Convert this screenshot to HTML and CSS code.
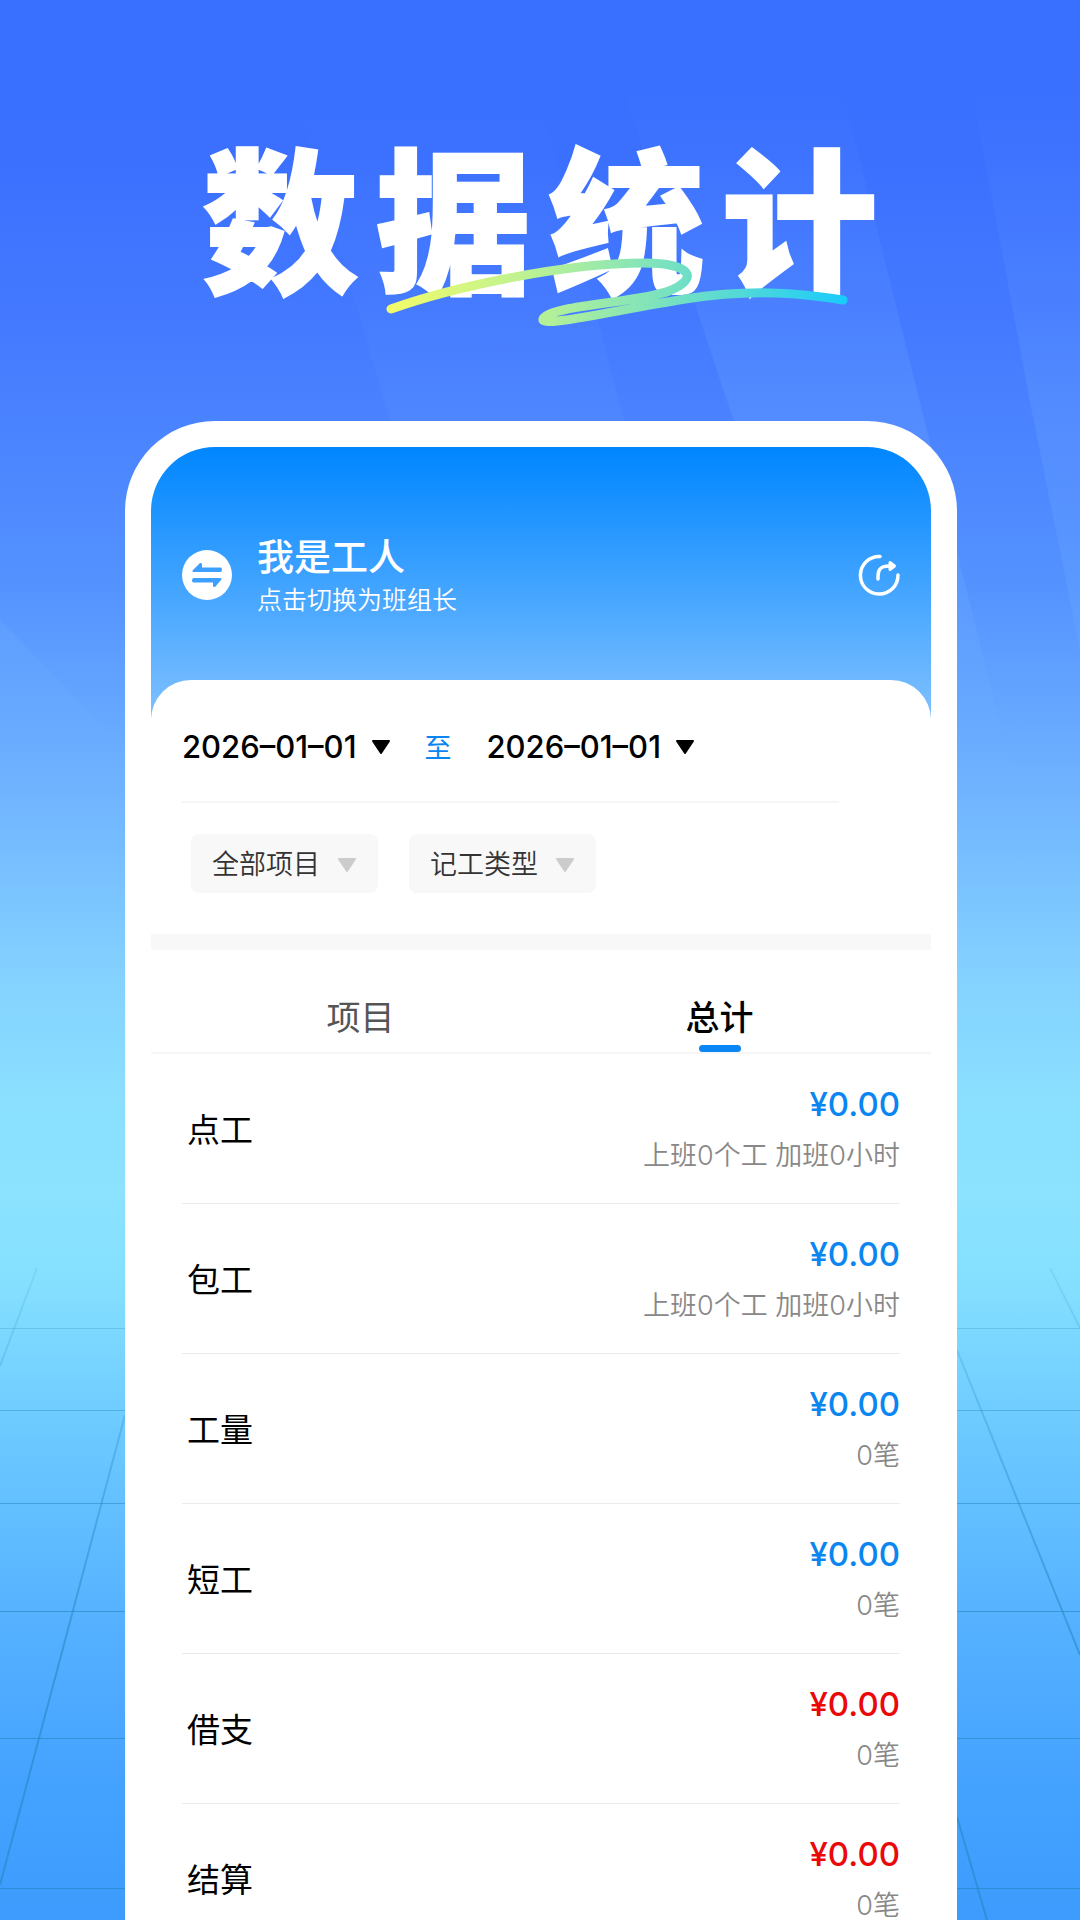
FILE: index.html
```
<!DOCTYPE html>
<html lang="zh-CN">
<head>
    <meta charset="utf-8">
    <meta name="viewport" content="width=device-width, initial-scale=1">
    <title>数据统计</title>
    <link rel="stylesheet" href="styles.css">
</head>
<body>
<div class="page">
    <svg class="backdrop" viewBox="0 0 1080 1920" preserveAspectRatio="none" aria-hidden="true">
        <defs>
            <linearGradient id="beam" gradientUnits="userSpaceOnUse" x1="0" y1="80" x2="0" y2="780">
                <stop offset="0" stop-color="#8cc8ff" stop-opacity="0"/>
                <stop offset="0.45" stop-color="#8cc8ff" stop-opacity="0.14"/>
                <stop offset="0.75" stop-color="#8cc8ff" stop-opacity="0.12"/>
                <stop offset="1" stop-color="#8cc8ff" stop-opacity="0"/>
            </linearGradient>
            <linearGradient id="grid" gradientUnits="userSpaceOnUse" x1="0" y1="1260" x2="0" y2="1650">
                <stop offset="0" stop-color="#1f86bd" stop-opacity="0.1"/>
                <stop offset="1" stop-color="#1f86bd" stop-opacity="0.55"/>
            </linearGradient>
        </defs>
        <g fill="url(#beam)">
            <path d="M0 620 L125 750 L200 860 L0 860Z"/>
            <path d="M290 80 L396 440 H629 L535 80Z" opacity="0.4"/>
            <path d="M620 80 L737 430 L900 860 H1034 L959 560 L840 80Z"/>
            <path d="M970 80 L1030 402 L1080 650 L1080 80Z"/>
        </g>
        <g fill="none" stroke="url(#grid)" stroke-width="2">
            <path d="M37 1268 L0 1366 M1050 1268 L1080 1328 M125 1415 L0 1885 M957 1350 L1080 1655 M957 1817 L987 1920"/>
        </g>
        <g fill="#1f86bd">
            <rect y="1328" width="1080" height="1" opacity="0.25"/>
            <rect y="1410" width="1080" height="1" opacity="0.4"/>
            <rect y="1503" width="1080" height="1" opacity="0.5"/>
            <rect y="1611" width="1080" height="1" opacity="0.6"/>
            <rect y="1738" width="1080" height="1" opacity="0.6"/>
            <rect y="1888" width="1080" height="1" opacity="0.6"/>
        </g>
    </svg>

    <header class="hero">
        <h1 class="hero-title">数据统计</h1>
        <svg class="hero-swoosh" viewBox="0 0 462 72" aria-hidden="true">
            <defs>
                <linearGradient id="swoosh" gradientUnits="userSpaceOnUse" x1="0" y1="0" x2="462" y2="0">
                    <stop offset="0" stop-color="#f4fc68"/>
                    <stop offset="0.35" stop-color="#b4f098"/>
                    <stop offset="0.65" stop-color="#6fdfc6"/>
                    <stop offset="1" stop-color="#18cbfb"/>
                </linearGradient>
            </defs>
            <path d="M5 53 C70 30 180 7 258 7 C304 7 315 22 283 35 C252 47 164 49 157 63 C155 72 225 55 299 43 C370 32 420 38 457 44" fill="none" stroke="url(#swoosh)" stroke-width="9" stroke-linecap="round" stroke-linejoin="round"/>
        </svg>
    </header>

    <main class="phone">
        <div class="topbar">
            <button class="switch" type="button">
                <svg class="switch-icon" viewBox="0 0 50 50" aria-hidden="true">
                    <circle cx="25" cy="25" r="25" fill="#fff"/>
                    <path d="M10.500 20.500 L18 13 Q20 12.500 20 14.500 V17.500 H38.500 Q40 17.500 40 19.500 T38.500 22 H12 Q10 22 10.500 20.500Z" fill="#3d9fff"/>
                    <path d="M39.500 29.500 L33 37 Q31 37.500 31 35.500 V32.500 H11.500 Q10 32.500 10 30.500 T11.500 28 H38 Q40 28 39.500 29.500Z" fill="#3d9fff"/>
                </svg>
                <span class="switch-text">
                    <span class="role">我是工人</span>
                    <span class="role-hint">点击切换为班组长</span>
                </span>
            </button>
            <button class="share" type="button" aria-label="分享">
                <svg viewBox="0 0 42 42" aria-hidden="true">
                    <path d="M22 2.500 A18.800 18.800 0 1 0 40 21" fill="none" stroke="#fff" stroke-width="3.500" stroke-linecap="round"/>
                    <path d="M20 25 V22 C20 15 23 12 31 12" fill="none" stroke="#fff" stroke-width="3.500" stroke-linecap="round"/>
                    <path d="M32 8.500 L36.500 12 L32 15.500Z" fill="#fff" stroke="#fff" stroke-width="3" stroke-linejoin="round"/>
                </svg>
            </button>
        </div>

        <div class="sheet">
            <div class="dates">
                <button class="date" type="button">2026–01–01 <svg class="caret" viewBox="0 0 18 14" aria-hidden="true"><path d="M1 1 H17 L9 13Z"/></svg></button>
                <span class="to">至</span>
                <button class="date" type="button">2026–01–01 <svg class="caret" viewBox="0 0 18 14" aria-hidden="true"><path d="M1 1 H17 L9 13Z"/></svg></button>
            </div>

            <div class="filters">
                <div class="filter">
                    <select class="filter-select" aria-label="项目">
                        <option>全部项目</option>
                    </select>
                    <svg class="caret" viewBox="0 0 18 14" aria-hidden="true"><path d="M1 1 H17 L9 13Z"/></svg>
                </div>
                <div class="filter">
                    <select class="filter-select" aria-label="类型">
                        <option>记工类型</option>
                    </select>
                    <svg class="caret" viewBox="0 0 18 14" aria-hidden="true"><path d="M1 1 H17 L9 13Z"/></svg>
                </div>
            </div>

            <div class="tabs" role="tablist">
                <button class="tab" type="button" role="tab" aria-selected="false">项目</button>
                <button class="tab active" type="button" role="tab" aria-selected="true">总计</button>
            </div>

            <ul class="totals">
                <li class="row">
                    <span class="name">点工</span>
                    <span class="values"><span class="amount">¥0.00</span><span class="detail">上班0个工 加班0小时</span></span>
                </li>
                <li class="row">
                    <span class="name">包工</span>
                    <span class="values"><span class="amount">¥0.00</span><span class="detail">上班0个工 加班0小时</span></span>
                </li>
                <li class="row">
                    <span class="name">工量</span>
                    <span class="values"><span class="amount">¥0.00</span><span class="detail">0笔</span></span>
                </li>
                <li class="row">
                    <span class="name">短工</span>
                    <span class="values"><span class="amount">¥0.00</span><span class="detail">0笔</span></span>
                </li>
                <li class="row">
                    <span class="name">借支</span>
                    <span class="values"><span class="amount red">¥0.00</span><span class="detail">0笔</span></span>
                </li>
                <li class="row">
                    <span class="name">结算</span>
                    <span class="values"><span class="amount red">¥0.00</span><span class="detail">0笔</span></span>
                </li>
            </ul>
        </div>
    </main>
</div>
</body>
</html>
```
FILE: styles.css
```
* {
    box-sizing: border-box;
}
body {
    margin: 0;
    font-family: "Noto Sans CJK SC", sans-serif;
    color: #000;
}
button, select {
    margin: 0;
    padding: 0;
    border: 0;
    background: none;
    font: inherit;
    color: inherit;
    cursor: pointer;
}
.page {
    position: relative;
    height: 100vh;
    overflow: hidden;
    background: linear-gradient(#3a70ff 0%, #3b70ff 8%, #4378ff 16%, #4981ff 21%, #5391ff 30%, #6fb3ff 41%, #84d2ff 51%, #8adfff 57%, #8be3ff 62%, #84dfff 67%, #6bc8ff 75%, #54b0ff 85%, #44a2ff 93%, #3d9bfd 100%);
}
.backdrop {
    position: absolute;
    inset: 0;
    width: 100%;
    height: 100%;
}

/* heading */
.hero {
    position: relative;
    padding: 133px 0 128px;
    text-align: center;
    color: #fff;
}
.hero-title {
    margin: 0;
    font-size: 156px;
    line-height: 160px;
    font-weight: 900;
    letter-spacing: 17px;
    text-indent: 17px;
    -webkit-text-stroke: 2px #fff;
}
.hero-swoosh {
    position: absolute;
    top: 256px;
    left: calc(50% - 154px);
    width: 462px;
}

/* phone */
.phone {
    position: relative;
    margin: 0 123px 0 125px;
    border: 26px solid #fff;
    border-bottom: 0;
    border-radius: 90px 90px 0 0;
    background: linear-gradient(#0086ff, #7fc0ff 270px, #fff 271px);
    background-origin: padding-box;
}
.topbar {
    display: flex;
    justify-content: space-between;
    align-items: center;
    height: 233px;
    padding: 23px 31px 0;
    color: #fff;
}
.switch {
    display: flex;
    align-items: center;
    gap: 25px;
    text-align: left;
}
.switch-icon {
    width: 50px;
    height: 50px;
}
.switch-text {
    display: flex;
    flex-direction: column;
}
.role {
    font-size: 37px;
    line-height: 46px;
    font-weight: 500;
}
.role-hint {
    font-size: 25px;
    line-height: 40px;
    font-weight: 350;
}
.share svg {
    display: block;
    width: 42px;
    height: 42px;
}

/* sheet */
.sheet {
    border-radius: 40px 40px 0 0;
    background: #fff;
}
.dates {
    display: flex;
    align-items: center;
    height: 123px;
    margin: 0 92px 0 31px;
    padding-top: 12px;
    border-bottom: 2px solid #f6f6f6;
}
.date {
    display: flex;
    align-items: center;
    gap: 15px;
    font-family: Inter, sans-serif;
    font-size: 31px;
    font-weight: 500;
}
.caret {
    width: 18px;
    height: 14px;
    fill: currentColor;
    stroke: currentColor;
    stroke-width: 2;
    stroke-linejoin: round;
}
.to {
    margin: 0 35px;
    font-size: 27px;
    color: #0b86f0;
}
.filters {
    display: flex;
    gap: 31px;
    padding: 31px 40px 41px;
    border-bottom: 16px solid #f8f8f8;
}
.filter {
    position: relative;
    color: #ccc;
}
.filter-select {
    width: 187px;
    height: 59px;
    padding: 0 21px 2px;
    border-radius: 8px;
    background: #f8f8f8;
    appearance: none;
    font-size: 27px;
    font-weight: 350;
    color: #333;
}
.filter .caret {
    position: absolute;
    top: 24px;
    right: 22px;
    pointer-events: none;
}
.tabs {
    display: flex;
    height: 104px;
    padding: 0 32px 0 30px;
    border-bottom: 2px solid #f6f6f6;
}
.tab {
    flex: 1;
    position: relative;
    padding-top: 31px;
    padding-bottom: 2px;
    font-size: 34px;
    line-height: 68px;
    color: #555;
}
.tab.active {
    font-weight: 500;
    color: #000;
}
.tab.active::after {
    content: "";
    position: absolute;
    left: 50%;
    bottom: 0;
    width: 42px;
    height: 7px;
    margin-left: -21px;
    border-radius: 4px;
    background: #0b86f5;
}

/* totals */
.totals {
    margin: 0 31px;
    padding: 0;
    list-style: none;
}
.row {
    display: flex;
    justify-content: space-between;
    align-items: center;
    height: 150px;
    padding-left: 5px;
    border-bottom: 1px solid #ebebeb;
}
.name {
    padding-bottom: 1px;
    font-size: 33px;
}
.values {
    display: flex;
    flex-direction: column;
    padding-top: 5px;
    text-align: right;
}
.amount {
    font-family: Inter, sans-serif;
    font-size: 33px;
    line-height: 50px;
    font-weight: 500;
    color: #0b86f0;
}
.amount.red {
    color: #ea0808;
}
.detail {
    font-family: Inter, "Noto Sans CJK SC", sans-serif;
    font-size: 27px;
    line-height: 54px;
    font-weight: 350;
    color: #888;
}
```
